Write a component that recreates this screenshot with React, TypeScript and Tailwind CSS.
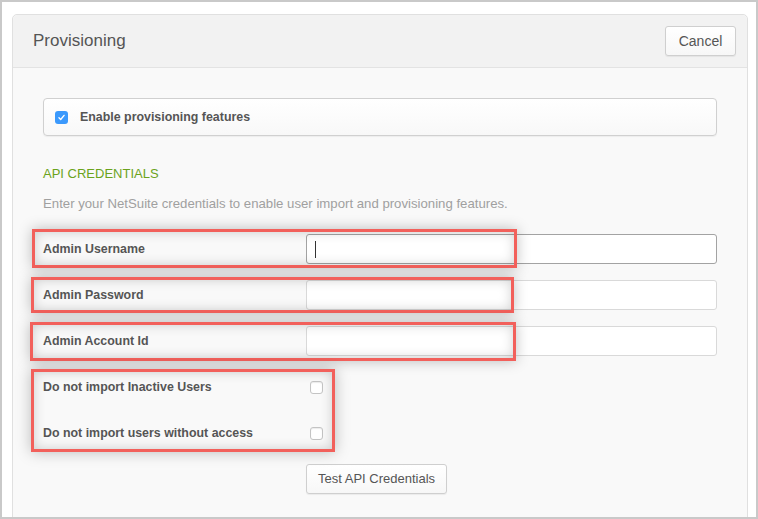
import React from 'react';

const font = { fontFamily: '"Liberation Sans", Arial, sans-serif' };

function Annotation({ className }: { className: string }) {
  return (
    <span
      className={`pointer-events-none absolute border-[3px] border-[#f2605b] shadow-[0_0_14px_rgba(0,0,0,0.25),inset_0_0_12px_rgba(0,0,0,0.18)] ${className}`}
    />
  );
}

function TextRow({ label, focused }: { label: string; focused?: boolean }) {
  return (
    <div className="flex h-[30px] items-center">
      <div className="w-[263px] text-[12.4px] font-bold text-[#555]">{label}</div>
      <div
        className={`relative h-[30px] flex-1 rounded-[3px] border bg-white ${
          focused ? 'border-[#a3a3a3]' : 'border-[#d9d9d9]'
        }`}
      >
        {focused && <span className="absolute left-[8px] top-[6px] h-[17px] w-px bg-[#333]" />}
      </div>
    </div>
  );
}

function CheckRow({ label }: { label: string }) {
  return (
    <div className="flex h-[30px] items-center">
      <div className="w-[263px] text-[12.4px] font-bold text-[#555]">{label}</div>
      <span className="ml-[4px] h-[13px] w-[13px] rounded-[3px] border border-[#c4c4c4] bg-white shadow-[inset_0_1px_1px_rgba(0,0,0,0.08)]" />
    </div>
  );
}

export default function App() {
  return (
    <div style={font} className="h-[519px] w-[758px] overflow-hidden border-2 border-[#c9c9c9] bg-white pl-[10px] pr-[8px] pt-[12px]">
      <div className="h-[520px] rounded-t-[5px] border border-[#e0e0e0] bg-[#f9f9f9]">
        {/* Header */}
        <div className="flex h-[53px] items-center justify-between rounded-t-[5px] border-b border-[#e3e3e3] bg-[#f2f2f2] pl-[20px] pr-[11px]">
          <h1 className="text-[17px] text-[#555]">Provisioning</h1>
          <button className="h-[30px] w-[71px] rounded-[3px] border border-[#cfcfcf] bg-gradient-to-b from-white to-[#f7f7f7] text-[14px] text-[#555] shadow-[0_1px_1px_rgba(0,0,0,0.06)]">
            Cancel
          </button>
        </div>

        {/* Body */}
        <div className="px-[30px] pt-[30px]">
          <label className="flex h-[38px] items-center gap-[12px] rounded-[4px] border border-[#d0d0d0] bg-gradient-to-b from-white to-[#f8f8f8] pl-[11px] shadow-[0_1px_1px_rgba(0,0,0,0.05)]">
            <span className="flex h-[13px] w-[13px] items-center justify-center rounded-[3px] bg-[#3b99fc]">
              <svg viewBox="0 0 10 10" className="h-[9px] w-[9px]" fill="none" stroke="white" strokeWidth="1.5" strokeLinecap="round" strokeLinejoin="round">
                <path d="M2.2 5.3 4.1 7.2 7.9 2.6" />
              </svg>
            </span>
            <span className="pt-px text-[12.4px] font-bold text-[#555]">Enable provisioning features</span>
          </label>

          <h2 className="mt-[28px] text-[13px] leading-[20px] text-[#6ba31c]">API CREDENTIALS</h2>
          <p className="mt-[10px] text-[13.2px] leading-[20px] text-[#a0a0a0]">
            Enter your NetSuite credentials to enable user import and provisioning features.
          </p>

          <div className="mt-[20px] flex flex-col gap-[16px]">
            <div className="relative">
              <TextRow label="Admin Username" focused />
              <Annotation className="-left-[11px] -top-[5px] -bottom-[4px] w-[485px]" />
            </div>
            <div className="relative">
              <TextRow label="Admin Password" />
              <Annotation className="-left-[12px] -top-[3px] -bottom-[3px] w-[483px]" />
            </div>
            <div className="relative">
              <TextRow label="Admin Account Id" />
              <Annotation className="-left-[13px] -top-[4px] -bottom-[5px] w-[486px]" />
            </div>
            <div className="relative flex flex-col gap-[16px]">
              <CheckRow label="Do not import Inactive Users" />
              <CheckRow label="Do not import users without access" />
              <Annotation className="-left-[12px] -top-[3px] -bottom-[4px] w-[304px]" />
            </div>
            <div className="flex h-[30px] items-center pl-[263px]">
              <button className="h-[30px] rounded-[3px] border border-[#cfcfcf] bg-gradient-to-b from-white to-[#f7f7f7] px-[11px] text-[13px] text-[#555] shadow-[0_1px_1px_rgba(0,0,0,0.06)]">
                Test API Credentials
              </button>
            </div>
          </div>
        </div>
      </div>
    </div>
  );
}
